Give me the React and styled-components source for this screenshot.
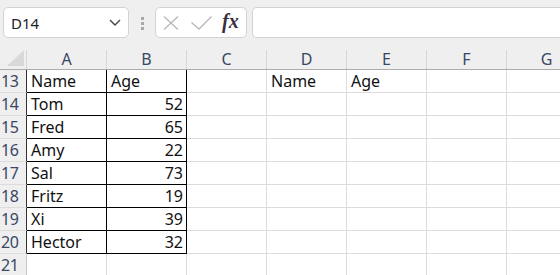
import React from "react";
import styled, { createGlobalStyle } from "styled-components";

const columns = ["A", "B", "C", "D", "E", "F", "G"];

const people = [
  ["Tom", 52],
  ["Fred", 65],
  ["Amy", 22],
  ["Sal", 73],
  ["Fritz", 19],
  ["Xi", 39],
  ["Hector", 32],
];

// rows 13..21, only A:B is the bordered table, D:E holds the empty header copy
const rows = [
  { n: 13, cells: { A: "Name", B: "Age", D: "Name", E: "Age" }, boxed: true },
  ...people.map(([name, age], i) => ({
    n: 14 + i,
    cells: { A: name, B: age },
    boxed: true,
  })),
  { n: 21, cells: {}, boxed: false },
];

const App = () => {
  return (
    <Sheet>
      <GlobalStyle />
      <Toolbar>
        <NameBox>
          <NameText>D14</NameText>
          <svg width="12" height="7" viewBox="0 0 12 7">
            <path d="M1 1 L6 6 L11 1" fill="none" stroke="#444" strokeWidth="1.4" />
          </svg>
        </NameBox>
        <Grip>
          <Dot />
          <Dot />
          <Dot />
        </Grip>
        <FxBox>
          <svg width="16" height="14" viewBox="0 0 16 14">
            <path d="M1 0.5 L15 13.5 M15 0.5 L1 13.5" stroke="#b8b8b8" strokeWidth="1.3" fill="none" />
          </svg>
          <svg width="21" height="14" viewBox="0 0 21 14">
            <path d="M0.5 6.5 L8 13 L20.5 0.5" stroke="#b8b8b8" strokeWidth="1.3" fill="none" />
          </svg>
          <Fx>fx</Fx>
        </FxBox>
        <FormulaInput />
      </Toolbar>

      <HeaderRow>
        <Corner>
          <svg width="18" height="17" viewBox="0 0 18 17">
            <path d="M17 0 L17 16 L0 16 Z" fill="#d8d8d8" />
          </svg>
        </Corner>
        {columns.map((c) => (
          <ColHead key={c}>{c}</ColHead>
        ))}
      </HeaderRow>

      {rows.map((row) => (
        <Row key={row.n}>
          <RowHead $edge={row.boxed}>{row.n}</RowHead>
          {columns.map((c) => {
            const value = row.cells[c];
            const boxed = row.boxed && (c === "A" || c === "B");
            return (
              <Cell
                key={c}
                $boxed={boxed}
                $right={typeof value === "number"}
              >
                {value}
              </Cell>
            );
          })}
        </Row>
      ))}
    </Sheet>
  );
};

export default App;

const GlobalStyle = createGlobalStyle`
  body {
    margin: 0;
    background: #fff;
    font-family: "Noto Sans", "Liberation Sans", sans-serif;
  }
`;

const Sheet = styled.div`
  width: 560px;
  height: 275px;
  overflow: hidden;
  background: #fff;
`;

const Toolbar = styled.div`
  display: flex;
  align-items: flex-start;
  height: 48px;
  padding: 7px 0 0 3px;
  box-sizing: border-box;
  background: #efefef;
`;

const Box = styled.div`
  height: 31px;
  box-sizing: border-box;
  background: #fff;
  border: 1px solid #d3d3d3;
  border-radius: 5px;
  display: flex;
  align-items: center;
`;

const NameBox = styled(Box)`
  width: 126px;
  padding: 0 7px 0 7px;
  justify-content: space-between;
`;

const NameText = styled.span`
  font-size: 15px;
  color: #222;
`;

const Grip = styled.div`
  display: flex;
  flex-direction: column;
  gap: 2px;
  margin: 10px 0 0 12px;
`;

const Dot = styled.span`
  width: 3px;
  height: 3px;
  background: #a9a9a9;
`;

const FxBox = styled(Box)`
  width: 92px;
  margin-left: 11px;
  padding: 0 0 0 7px;
  gap: 12px;
`;

const Fx = styled.span`
  font-family: "Liberation Serif", "DejaVu Serif", serif;
  font-style: italic;
  font-weight: bold;
  font-size: 20px;
  color: #3a2f3f;
  margin-left: -2px;
  margin-top: -3px;
`;

const FormulaInput = styled(Box)`
  flex: 1;
  margin-left: 5px;
  border-right: none;
  border-radius: 5px 0 0 5px;
`;

const HeaderRow = styled.div`
  display: flex;
  align-items: flex-end;
  height: 22px;
  box-sizing: border-box;
  background: #efefef;
  border-bottom: 1px solid #acacac;
`;

const Corner = styled.div`
  width: 27px;
  flex-shrink: 0;
  height: 19px;
  box-sizing: border-box;
  border-right: 1px solid #d6d6d6;
  display: flex;
  justify-content: flex-end;
  align-items: flex-end;
  padding: 0 1px 2px 0;
  svg {
    display: block;
  }
`;

const ColHead = styled.div`
  width: 80px;
  flex-shrink: 0;
  height: 19px;
  box-sizing: border-box;
  border-right: 1px solid #d6d6d6;
  text-align: center;
  font-size: 16px;
  line-height: 18px;
  color: #3a4763;
`;

const Row = styled.div`
  display: flex;
  height: 23px;
`;

const RowHead = styled.div`
  width: 27px;
  flex-shrink: 0;
  box-sizing: border-box;
  background: #efefef;
  border-right: 1px solid ${({ $edge }) => ($edge ? "#333" : "#c9c9c9")};
  border-bottom: 1px solid #dcdcdc;
  padding: 1px 0 0 1px;
  font-size: 16px;
  line-height: 21px;
  color: #3a4763;
  letter-spacing: -0.3px;
`;

const Cell = styled.div`
  width: 80px;
  flex-shrink: 0;
  box-sizing: border-box;
  border-right: 1px solid ${({ $boxed }) => ($boxed ? "#000" : "#dcdcdc")};
  border-bottom: 1px solid ${({ $boxed }) => ($boxed ? "#000" : "#dcdcdc")};
  padding: 1px 3px 0 4px;
  text-align: ${({ $right }) => ($right ? "right" : "left")};
  font-size: 16px;
  line-height: 21px;
  color: #111;
  white-space: nowrap;
`;
